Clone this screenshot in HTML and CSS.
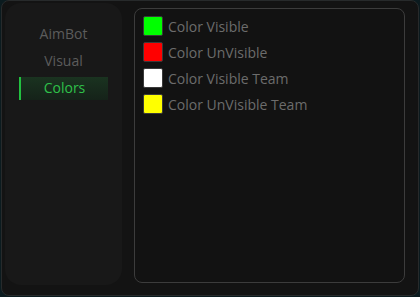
FILE: index.html
```html
<!DOCTYPE html>
<html lang="en">
<head>
    <meta charset="UTF-8">
    <meta name="viewport" content="width=device-width, initial-scale=1.0">
    <title>Menu</title>
    <link rel="stylesheet" href="styles.css">
</head>
<body>
    <div class="janela">
        <div class="lateral">
            <ul class="menu">
                <li>AimBot</li>
                <li>Visual</li>
                <li class="ativo">Colors</li>
            </ul>
        </div>

        <div class="painel">
            <div class="linha"><span class="cor verde"></span>Color Visible</div>
            <div class="linha"><span class="cor vermelho"></span>Color UnVisible</div>
            <div class="linha"><span class="cor branco"></span>Color Visible Team</div>
            <div class="linha"><span class="cor amarelo"></span>Color UnVisible Team</div>
        </div>
    </div>
</body>
</html>
```

FILE: styles.css
```css
*{
    margin: 0;
    padding: 0;
    box-sizing: border-box;
    font-family: "Open Sans", Arial, sans-serif;
}

body{
    background-color: #0b1b1f;
    width: 420px;
    height: 297px;
    overflow: hidden;
}

.janela{
    display: flex;
    align-items: flex-start;
    width: 418px;
    height: 296px;
    margin-left: 1px;
    background-color: #131313;
    border: 1px solid #272a2b;
    border-radius: 8px;
    padding: 2px 13px 0 3px;
}

.lateral{
    width: 117px;
    height: 282px;
    background-color: #181818;
    border-radius: 16px;
    padding: 20px 14px 0 14px;
}

.menu{
    list-style: none;
    display: flex;
    flex-direction: column;
    gap: 4px;
}

.menu li{
    height: 23px;
    line-height: 22px;
    text-align: center;
    font-size: 14px;
    color: #5c5c5c;
}

.menu .ativo{
    color: #2fc04a;
    border-left: 2px solid #22c040;
    background: linear-gradient(#1a3320, #152219);
}

.painel{
    width: 271px;
    height: 275px;
    margin-top: 5px;
    margin-left: 12px;
    border: 1px solid #3c3c3c;
    border-radius: 8px;
    background-color: #121212;
    padding: 7px 8px;
    display: flex;
    flex-direction: column;
    gap: 6px;
}

.linha{
    display: flex;
    align-items: center;
    gap: 5px;
    height: 20px;
    font-size: 14px;
    color: #6c6c6c;
}

.cor{
    width: 20px;
    height: 20px;
    border: 1px solid #3a3a3a;
    border-radius: 2px;
}

.verde{ background-color: #00ff00; }
.vermelho{ background-color: #ff0000; }
.branco{ background-color: #ffffff; }
.amarelo{ background-color: #ffff00; }
```
